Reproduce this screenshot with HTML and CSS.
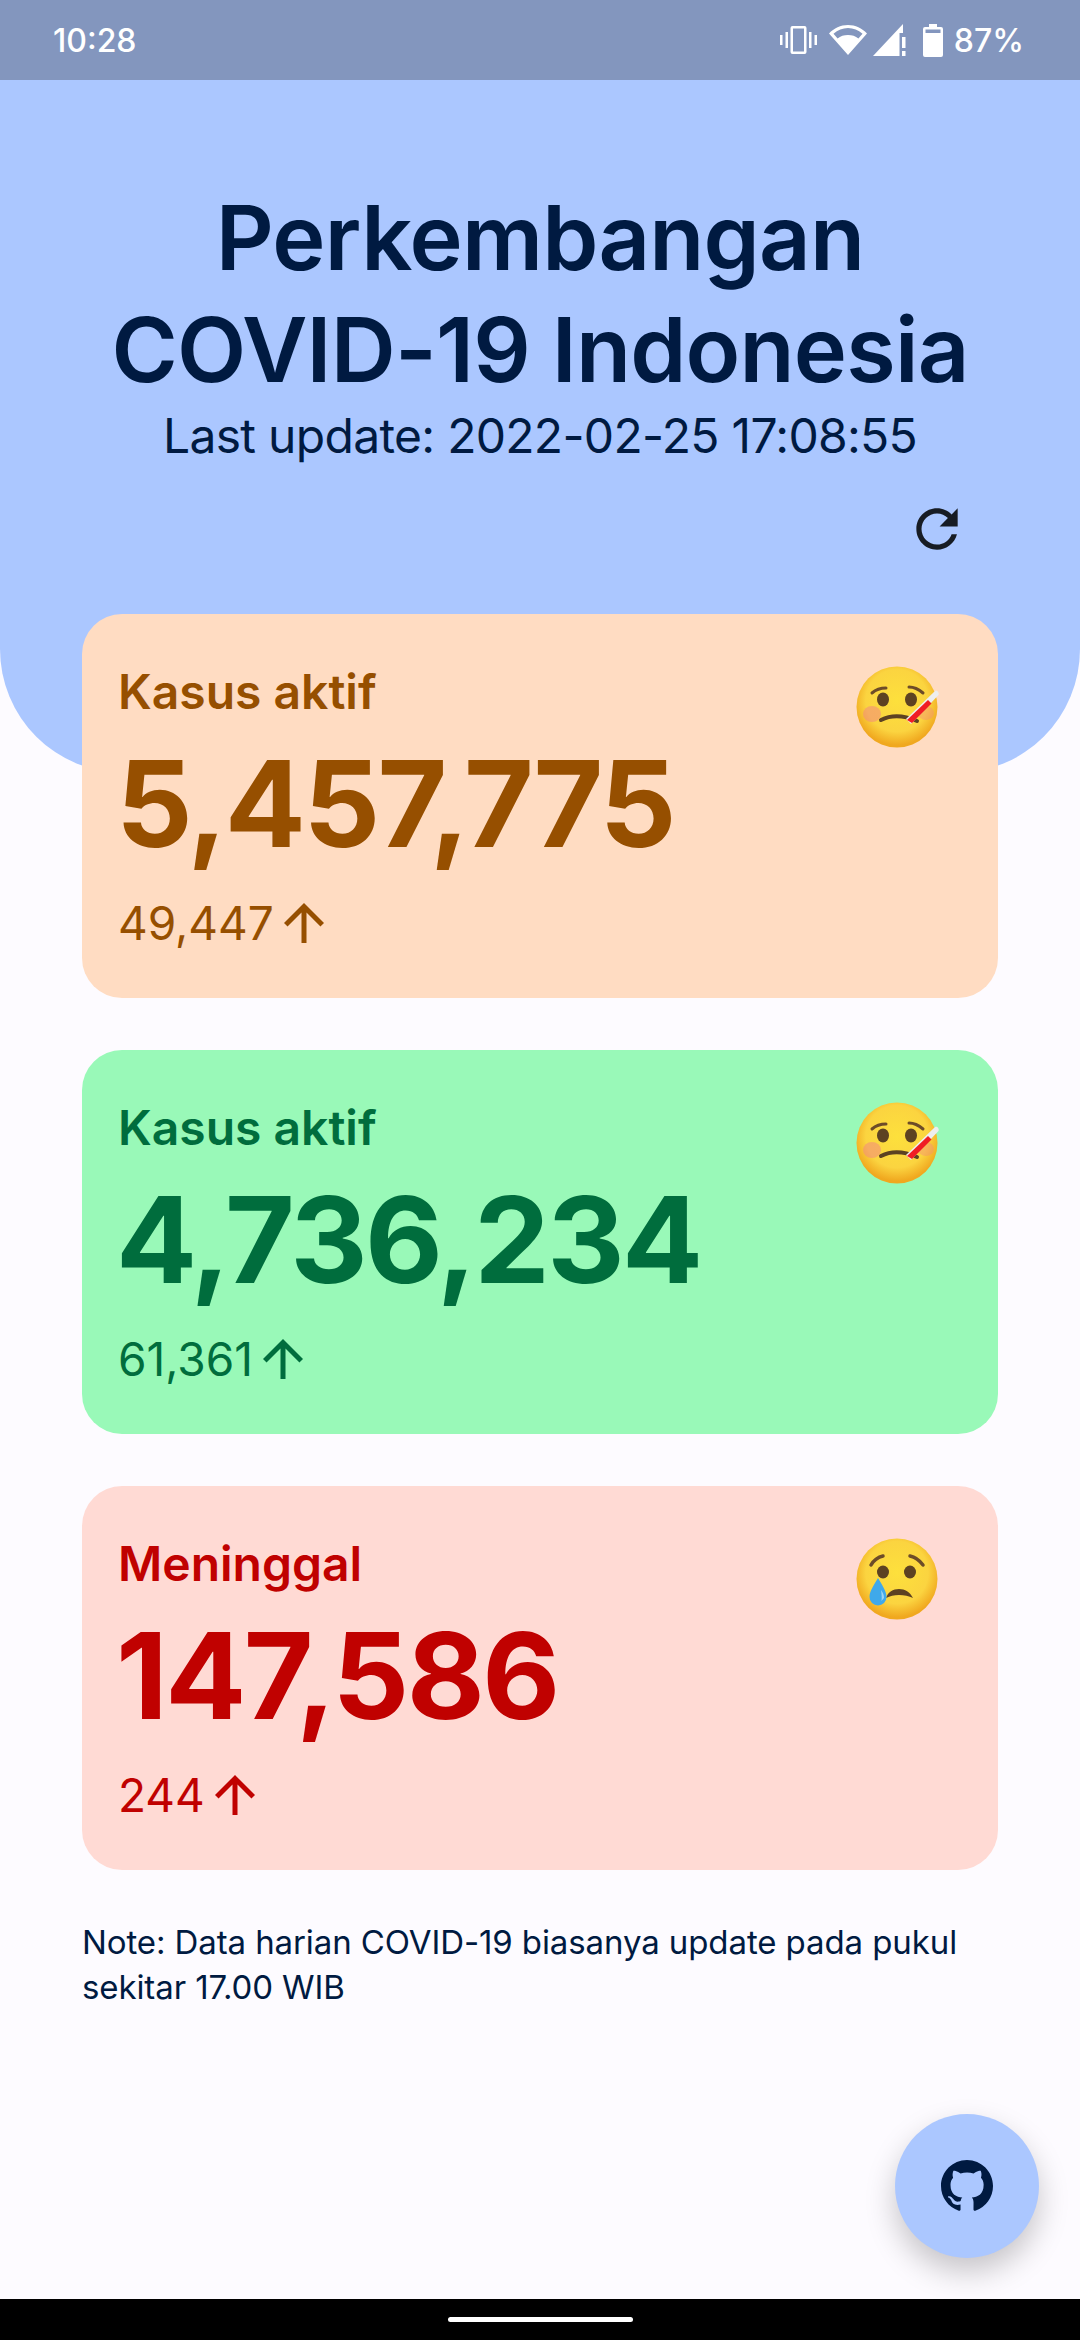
FILE: index.html
```html
<!DOCTYPE html>
<html lang="en">
  <head>
    <meta charset="UTF-8" />
    <meta name="viewport" content="width=device-width, initial-scale=1.0" />
    <title>Perkembangan COVID-19 Indonesia</title>
    <link rel="stylesheet" href="styles.css">
  </head>
  <body>
    <svg class="defs" width="0" height="0">
      <defs>
        <radialGradient id="face" cx="50%" cy="42%" r="55%">
          <stop offset="0" stop-color="#fde03c" />
          <stop offset="0.7" stop-color="#fbd440" />
          <stop offset="1" stop-color="#f0a81f" />
        </radialGradient>
        <symbol id="emoji-fever" viewBox="0 0 84 84">
          <circle cx="41" cy="41" r="40.500" fill="url(#face)" />
          <ellipse cx="16" cy="48" rx="9" ry="8" fill="#f28a80" opacity="0.55" />
          <ellipse cx="70" cy="47" rx="8" ry="7" fill="#f28a80" opacity="0.4" />
          <path d="M16 27c4-3.500 9-5 14-5M53 21c5 0 10 2.500 14 6" fill="none" stroke="#6d4c28" stroke-width="3" stroke-linecap="round" />
          <ellipse cx="27" cy="33.500" rx="6" ry="7" fill="#5d4222" />
          <ellipse cx="55" cy="33.500" rx="6" ry="7" fill="#5d4222" />
          <path d="M25 54c9-4.500 22-5 36 1" fill="none" stroke="#5d4222" stroke-width="4" stroke-linecap="round" />
          <path d="M50 53l29-28c2-1 4.500 1.500 3.500 4L55 58z" fill="#eeeeee" />
          <path d="M51 54l21-20 3.500 3.500L56 57z" fill="#f01d24" />
        </symbol>
        <symbol id="emoji-cry" viewBox="0 0 84 84">
          <circle cx="41" cy="41" r="40.500" fill="url(#face)" />
          <path d="M15 27c2-4 7-8 12-9M54 18c5 1 10 5 13 9" fill="none" stroke="#6d4c28" stroke-width="3.500" stroke-linecap="round" />
          <ellipse cx="27" cy="34" rx="6" ry="6.500" fill="#5d4222" />
          <ellipse cx="54" cy="34" rx="6" ry="6.500" fill="#5d4222" />
          <path d="M30 60c2-6 7-9 13-9s11 3 14 9c-4-2-9-3-14-3s-9 1-13 3z" fill="#5d4222" />
          <path d="M22 40c4 7 8.500 13 8.500 19a8.500 8.500 0 01-17 0c0-6 4.500-12 8.500-19z" fill="#3fa9ea" />
          <path d="M25 52c2 2.500 3 5 3 8l-2.500 3c.5-4 0-7-.5-11z" fill="#9bd4f5" />
        </symbol>
        <symbol id="arrow-up" viewBox="0 0 24 24">
          <path d="M4 12l1.410 1.410L11 7.830V20h2V7.830l5.580 5.590L20 12l-8-8-8 8z" />
        </symbol>
      </defs>
    </svg>

    <div class="app">
      <div class="status-bar">
        <span class="clock">10:28</span>
        <div class="status-icons">
          <svg class="ic-vibrate" viewBox="0 0 37 28" fill="#fff">
            <path d="M0 9h2.500v10H0zM5.500 6H8v16H5.500zM29 6h2.500v16H29zM34.500 9H37v10h-2.500z" />
            <path fill-rule="evenodd" d="M12.500 0h12a2 2 0 012 2v24a2 2 0 01-2 2h-12a2 2 0 01-2-2V2a2 2 0 012-2zm.5 2.500v23h11v-23z" />
          </svg>
          <svg class="ic-wifi" viewBox="0 0 38 30" fill="#fff">
            <path fill-rule="evenodd" d="M19 30L0 8.500C5 3.200 11.600 0 19 0s14 3.200 19 8.500zM4.500 8.800l4.100 4.600C11.400 11.200 15 10 19 10s7.600 1.200 10.400 3.400l4.100-4.600C29.200 5.200 24.400 3 19 3S8.800 5.200 4.500 8.800z" />
          </svg>
          <svg class="ic-signal" viewBox="0 0 33 32" fill="#fff">
            <path d="M0 32L30 0v9h-3.500v23zM29 13h3.500v11H29zM29 27h3.500v5H29z" />
          </svg>
          <svg class="ic-battery" viewBox="0 0 20 33" fill="#fff">
            <path fill-rule="evenodd" d="M6 0h8v3h4a2 2 0 012 2v26a2 2 0 01-2 2H2a2 2 0 01-2-2V5a2 2 0 012-2h4zM2.500 5.500V9h15V5.500z" />
          </svg>
          <span class="battery-level">87%</span>
        </div>
      </div>

      <main class="content">
        <header class="hero">
          <h1>Perkembangan<br />COVID-19 Indonesia</h1>
          <p class="last-update">Last update: 2022-02-25 17:08:55</p>
          <button class="refresh" type="button" aria-label="Refresh">
            <svg viewBox="0 0 24 24" fill="#171c24">
              <path d="M17.650 6.350C16.200 4.900 14.210 4 12 4c-4.420 0-7.990 3.580-7.990 8s3.570 8 7.990 8c3.730 0 6.840-2.550 7.730-6h-2.080c-.82 2.330-3.040 4-5.650 4-3.310 0-6-2.690-6-6s2.690-6 6-6c1.660 0 3.140.69 4.220 1.780L13 11h7V4l-2.350 2.350z" />
            </svg>
          </button>
        </header>

        <section class="cards">
          <article class="card card-active">
            <div class="card-text">
              <h2>Kasus aktif</h2>
              <p class="total">5,457,775</p>
              <p class="delta">49,447 <svg><use href="#arrow-up" /></svg></p>
            </div>
            <svg class="emoji"><use href="#emoji-fever" /></svg>
          </article>

          <article class="card card-recovered">
            <div class="card-text">
              <h2>Kasus aktif</h2>
              <p class="total">4,736,234</p>
              <p class="delta">61,361 <svg><use href="#arrow-up" /></svg></p>
            </div>
            <svg class="emoji"><use href="#emoji-fever" /></svg>
          </article>

          <article class="card card-deaths">
            <div class="card-text">
              <h2>Meninggal</h2>
              <p class="total">147,586</p>
              <p class="delta">244 <svg><use href="#arrow-up" /></svg></p>
            </div>
            <svg class="emoji"><use href="#emoji-cry" /></svg>
          </article>
        </section>

        <p class="note">Note: Data harian COVID-19 biasanya update pada pukul sekitar 17.00 WIB</p>
      </main>

      <button class="fab" type="button" aria-label="GitHub">
        <svg viewBox="0 0 16 16" fill="#001a41">
          <path d="M8 0C3.580 0 0 3.580 0 8c0 3.540 2.290 6.530 5.470 7.590.4.07.55-.17.55-.38 0-.19-.01-.82-.01-1.490-2.010.37-2.530-.49-2.690-.94-.09-.23-.48-.94-.82-1.130-.28-.15-.68-.52-.01-.53.63-.01 1.080.58 1.230.82.72 1.210 1.870.87 2.330.66.07-.52.28-.87.51-1.070-1.780-.2-3.640-.89-3.640-3.950 0-.87.31-1.590.82-2.150-.08-.2-.36-1.020.08-2.120 0 0 .67-.21 2.200.82.64-.18 1.320-.27 2-.27.68 0 1.360.09 2 .27 1.530-1.040 2.200-.82 2.200-.82.44 1.100.16 1.920.08 2.120.51.56.82 1.270.82 2.150 0 3.070-1.870 3.750-3.650 3.950.29.25.54.73.54 1.480 0 1.070-.01 1.930-.01 2.200 0 .21.15.46.55.38A8.013 8.013 0 0016 8c0-4.420-3.580-8-8-8z" />
        </svg>
      </button>

      <div class="nav-bar"><span class="nav-pill"></span></div>
    </div>
  </body>
</html>
```

FILE: styles.css
```css
:root {
  --hero-color: #abc7ff;
  --page-color: #fdfbff;
  --ink-color: #001a41;
  --status-color: #8396be;
}

* {
  margin: 0;
  padding: 0;
  box-sizing: border-box;
}

body {
  font-family: "Inter", "Noto Sans", sans-serif;
  background-color: var(--page-color);
  color: var(--ink-color);
}

.defs {
  position: absolute;
}

.app {
  position: relative;
  display: flex;
  flex-direction: column;
  height: 2340px;
  overflow: hidden;
}

/* status bar */
.status-bar {
  display: flex;
  justify-content: space-between;
  align-items: center;
  height: 80px;
  padding: 0 56px 0 53px;
  background-color: var(--status-color);
  color: #fff;
  font-size: 32px;
  font-weight: 500;
}

.status-icons {
  display: flex;
  align-items: center;
}

.ic-vibrate {
  width: 37px;
  height: 28px;
  margin-right: 12px;
}

.ic-wifi {
  width: 38px;
  height: 30px;
  margin-right: 6px;
}

.ic-signal {
  width: 33px;
  height: 32px;
  margin-right: 17px;
}

.ic-battery {
  width: 20px;
  height: 33px;
  margin-right: 11px;
}

/* main */
.content {
  flex: 1;
}

.hero {
  display: flex;
  flex-direction: column;
  align-items: center;
  height: 693px;
  padding-top: 102px;
  background-color: var(--hero-color);
  border-radius: 0 0 124px 124px;
  text-align: center;
}

.hero h1 {
  font-size: 90px;
  font-weight: 600;
  letter-spacing: -0.8px;
  line-height: 112px;
}

.last-update {
  font-size: 48px;
  letter-spacing: -0.7px;
  line-height: 60px;
}

.refresh {
  align-self: flex-end;
  width: 62px;
  height: 62px;
  margin: 32px 112px 0 0;
  background: none;
  border: none;
}

.cards {
  display: flex;
  flex-direction: column;
  gap: 52px;
  margin: -159px 82px 0;
}

.card {
  display: flex;
  justify-content: space-between;
  height: 384px;
  padding: 48px 58px 0 36px;
  border-radius: 40px;
}

.card-active {
  background-color: #ffdcc2;
  color: #964f00;
}

.card-recovered {
  background-color: #99f9b8;
  color: #006d3d;
}

.card-deaths {
  background-color: #ffdad4;
  color: #c00100;
}

.card h2 {
  font-size: 48px;
  font-weight: 600;
  line-height: 60px;
}

.total {
  margin: 9px 0 0 -2px;
  font-size: 120px;
  font-weight: 700;
  letter-spacing: -2.6px;
  line-height: 146px;
}

.delta {
  display: flex;
  align-items: center;
  gap: 0;
  margin-top: 16px;
  font-size: 46px;
}

.delta svg {
  width: 60px;
  height: 60px;
  fill: currentColor;
}

.emoji {
  width: 84px;
  height: 84px;
  margin-top: 4px;
}

.note {
  margin: 50px 82px 0;
  font-size: 33px;
  letter-spacing: -0.1px;
  line-height: 45px;
}

/* floating button */
.fab {
  position: absolute;
  right: 41px;
  bottom: 82px;
  display: flex;
  align-items: center;
  justify-content: center;
  width: 144px;
  height: 144px;
  background-color: var(--hero-color);
  border: none;
  border-radius: 50%;
  box-shadow: 0 14px 30px rgba(0, 0, 0, 0.22);
}

.fab svg {
  width: 52px;
  height: 52px;
}

.nav-bar {
  display: flex;
  justify-content: center;
  align-items: center;
  height: 41px;
  background-color: #000;
}

.nav-pill {
  width: 185px;
  height: 5px;
  background-color: #fff;
  border-radius: 3px;
}
```
